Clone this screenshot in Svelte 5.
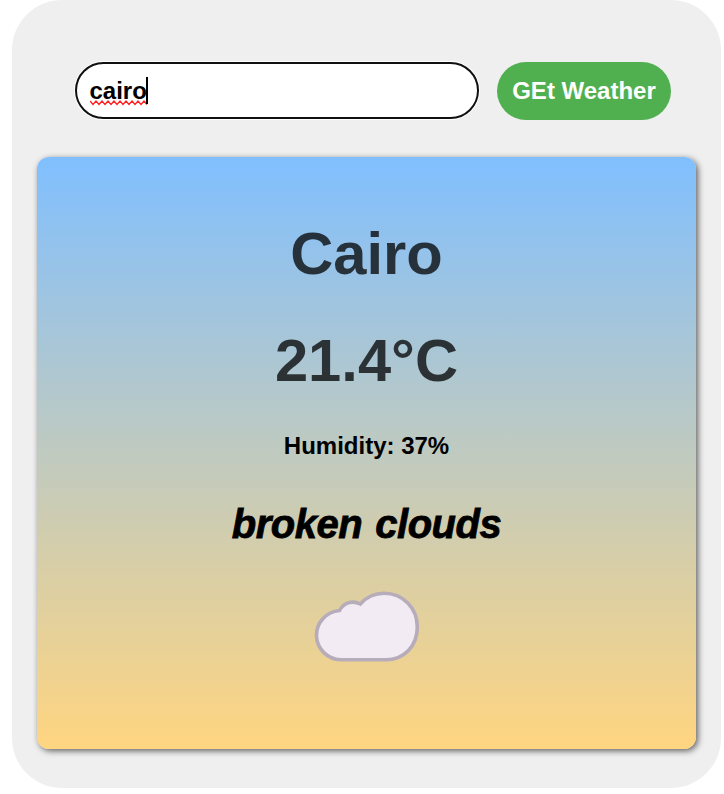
<script>
  const query = 'cairo';
  const weather = { city: 'Cairo', temperature: 21.4, humidity: 37, description: 'broken clouds' };
</script>

<main class="panel">
  <form class="search" onsubmit={(e) => e.preventDefault()}>
    <div class="field" role="textbox" tabindex="0" aria-label="City">
      <span class="query">{query}<svg class="squiggle" width="58" height="6" viewBox="0 0 58 6" aria-hidden="true"><path d="M0 1 L3 4.5 L6 1 L9 4.5 L12 1 L15 4.5 L18 1 L21 4.5 L24 1 L27 4.5 L30 1 L33 4.5 L36 1 L39 4.5 L42 1 L45 4.5 L48 1 L51 4.5 L54 1 L57 4.5" /></svg></span><span class="caret"></span>
    </div>
    <button type="submit">GEt Weather</button>
  </form>

  <section class="card">
    <h1>{weather.city}</h1>
    <p class="temperature">{weather.temperature}°C</p>
    <p class="humidity">Humidity: {weather.humidity}%</p>
    <p class="description">{weather.description}</p>
    <svg class="cloud" width="134" height="95" viewBox="0 0 134 95" aria-hidden="true">
      <path d="M41 79.8 A25.2 24.7 0 0 1 39.5 30.5 C44.5 21.5 53.5 20.5 60.3 24 C67 16.5 75 13.3 84 13.3 C103 13.3 117.3 28 117.3 47 C117.3 66 104 79.8 86 79.8 Z" />
    </svg>
  </section>
</main>

<style>
  :global(body) {
    margin: 0;
    background: #fff;
    font-family: "Liberation Sans", Arial, sans-serif;
    font-weight: bold;
  }

  .panel {
    box-sizing: border-box;
    width: 709px;
    height: 788px;
    margin-left: 12px;
    padding: 62px 25px 39px;
    border-radius: 50px;
    background: #efefef;
  }

  .search {
    display: flex;
    gap: 18px;
    height: 58px;
    margin: 0 0 37px 38px;
  }

  .field {
    box-sizing: border-box;
    display: flex;
    align-items: center;
    width: 404px;
    height: 57px;
    padding: 0 12.5px;
    border: 2px solid #101010;
    border-radius: 30px;
    outline: none;
    box-shadow: 0 0 0 1px #fff;
    background: #fff;
    color: #000;
    font-size: 24px;
    line-height: 28px;
  }

  .query {
    position: relative;
  }

  .squiggle {
    position: absolute;
    left: 0;
    bottom: -1px;
    fill: none;
    stroke: #ff2020;
    stroke-width: 1.3;
  }

  .caret {
    position: relative;
    left: -1px;
    width: 2px;
    height: 27px;
    background: #000;
  }

  button {
    width: 174px;
    height: 58px;
    padding: 0;
    border: 0;
    border-radius: 30px;
    background: #50b04f;
    color: #fff;
    font: bold 24px "Liberation Sans", Arial, sans-serif;
  }

  .card {
    display: flex;
    flex-direction: column;
    align-items: center;
    box-sizing: border-box;
    height: 592px;
    padding-top: 62px;
    border-radius: 12px;
    background: linear-gradient(180deg, #80bfff, #ffd580);
    box-shadow: 2px 2px 6px rgba(0, 0, 0, 0.6);
  }

  h1,
  p {
    margin: 0;
  }

  h1,
  .temperature {
    color: rgba(0, 0, 0, 0.75);
    font-size: 59.7px;
    line-height: 69px;
  }

  h1 {
    margin-bottom: 38px;
  }

  .humidity {
    margin-top: 37px;
    color: #000;
    font-size: 24px;
    line-height: 27px;
  }

  .description {
    margin-top: 42px;
    color: #000;
    font-size: 40px;
    font-style: italic;
    letter-spacing: -0.5px;
    word-spacing: 2.5px;
    line-height: 46px;
    -webkit-text-stroke: 0.8px #000;
  }

  .cloud {
    margin-top: 33px;
  }

  .cloud path {
    fill: #f2ebf3;
    stroke: #b6acba;
    stroke-width: 3.6;
  }
</style>
